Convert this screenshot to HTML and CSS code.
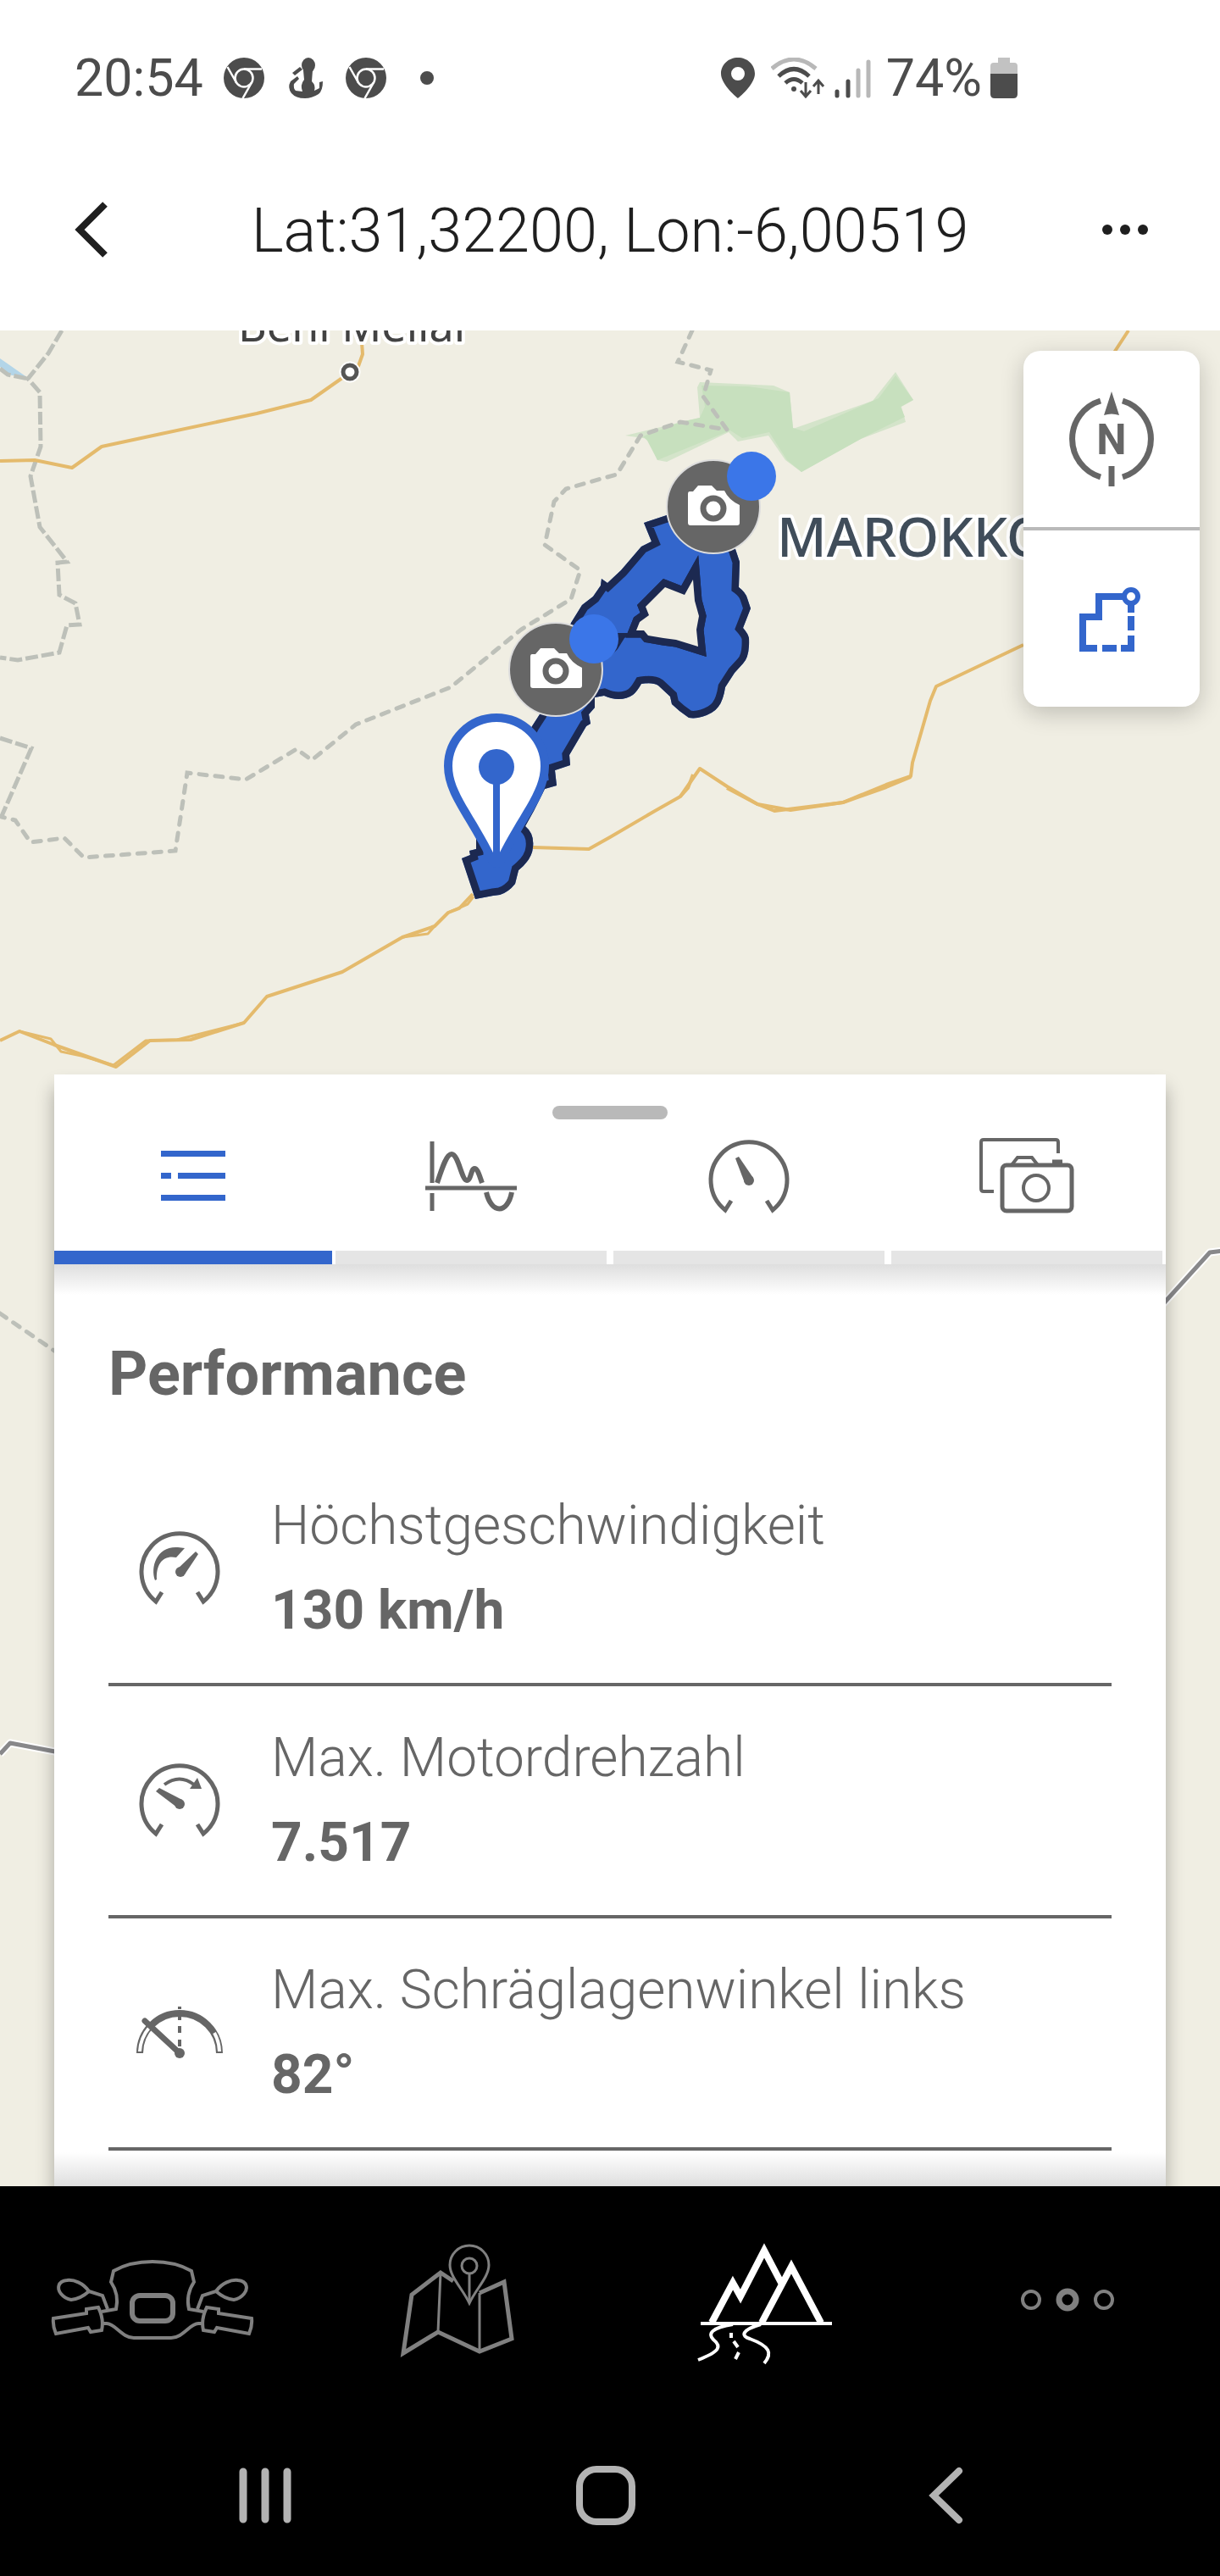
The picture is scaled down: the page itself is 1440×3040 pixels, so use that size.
FILE: index.html
```html
<!DOCTYPE html>
<html lang="de">
<head>
    <meta charset="UTF-8">
    <meta name="viewport" content="width=device-width, initial-scale=1.0">
    <title>Tour - Performance</title>
    <link rel="stylesheet" href="styles.css">
</head>
<body>
    <!-- Shared icon shapes -->
    <svg class="defs" width="0" height="0" aria-hidden="true">
        <symbol id="chrome" viewBox="0 0 48 48">
            <circle cx="24" cy="24" r="24" fill="#4c4c4c"/>
            <g fill="none" stroke="#fff" stroke-width="2.5">
                <circle cx="24" cy="24" r="10.5"/>
                <path d="M24 13.5H45M15 29.5L4.5 11M33 29.5L22.5 48"/>
            </g>
        </symbol>
        <symbol id="gauge" viewBox="0 0 96 88" overflow="visible">
            <path d="M27 72L20 83A45 45 0 1 1 76 83L69 72" fill="none" stroke="#666" stroke-width="5"/>
        </symbol>
        <symbol id="photo-pin" viewBox="-56 -56 112 112" overflow="visible">
            <circle r="55" fill="#666" stroke="#ddd" stroke-width="2"/>
            <path d="M-28-18h4l6-7h16l6 6h9q5 11 18 17V19q0 3-3 3H-27q-3 0-3-3V-15q0-3 2-3z" fill="#fff"/>
            <circle cy="2" r="12" fill="#fff" stroke="#666" stroke-width="7"/>
            <circle cx="45" cy="-36" r="29" fill="#3b76e8"/>
        </symbol>
    </svg>

    <div class="app">
        <div class="status-bar">
            <div class="status-left">
                <span>20:54</span>
                <svg width="48" height="48"><use href="#chrome"/></svg>
                <svg width="48" height="48" viewBox="0 0 48 48" fill="#4c4c4c">
                    <ellipse cx="28" cy="9" rx="8" ry="9"/>
                    <path d="M22 15h11l-1 13q5 5 3 11l6-3V29l4-1q0 11-5 15-8 5-16 5-11 0-16-6-5-7-1-14l8-6 2 3-6 6q-1 5 2 8l8 1q-3-8 2-14z"/>
                    <path d="M9 18l9-7 3 3-9 7z"/>
                </svg>
                <svg width="48" height="48"><use href="#chrome"/></svg>
                <svg width="48" height="48" viewBox="0 0 48 48"><circle cx="24" cy="24" r="8" fill="#4c4c4c"/></svg>
            </div>
            <div class="status-right">
                <svg width="52" height="48" viewBox="0 0 52 48">
                    <path d="M23 0C12 0 3 8 3 19c0 13 20 29 20 29s20-16 20-29C43 8 34 0 23 0zm0 27a8 8 0 1 1 0-16 8 8 0 0 1 0 16z" fill="#4c4c4c"/>
                </svg>
                <svg width="64" height="48" viewBox="0 0 64 48" fill="none" stroke="#4c4c4c" stroke-width="5">
                    <path d="M1 13Q27-9 53 13" stroke="#b8b8b8"/>
                    <path d="M9 22Q27 5 45 22M17 30Q27 21 37 30"/>
                    <circle cx="27" cy="37" r="3" fill="#4c4c4c" stroke="none"/>
                    <path d="M41 29V45M35 39l6 7 6-7M56 43V28M50 34l6-7 6 7" stroke-width="3"/>
                </svg>
                <svg width="52" height="48" viewBox="0 0 52 48" stroke-width="5" stroke-linecap="round">
                    <path d="M4 40v5M17 28v17" stroke="#4c4c4c"/>
                    <path d="M29 15v30M41 5v40" stroke="#b8b8b8"/>
                </svg>
                <span>74%</span>
                <svg width="32" height="48" viewBox="0 0 32 48">
                    <path d="M9 0h14v6h5q4 0 4 4v10H0V10q0-4 4-4h5z" fill="#c2c2c2"/>
                    <path d="M0 19h32v24q0 5-5 5H5q-5 0-5-5z" fill="#4c4c4c"/>
                </svg>
            </div>
        </div>

        <header class="header">
            <button class="header-button" aria-label="Zurück">
                <svg width="64" height="72" viewBox="0 0 64 72" fill="none" stroke="#1f1f1f" stroke-width="8"><path d="M44 5L14 35L44 65"/></svg>
            </button>
            <h1>Lat:31,32200, Lon:-6,00519</h1>
            <button class="header-button" aria-label="Mehr">
                <svg width="64" height="72" viewBox="0 0 64 72" fill="#1f1f1f"><circle cx="11" cy="35" r="6"/><circle cx="32" cy="35" r="6"/><circle cx="53" cy="35" r="6"/></svg>
            </button>
        </header>

        <main class="map">
            <svg class="map-canvas" viewBox="0 390 1440 2190" preserveAspectRatio="xMidYMin slice">
                <defs>
                    <path id="track" clip-rule="evenodd" d="M760 617L787 608L842 598L868 648L873 663L872 693Q880 699 882 706L886 718L877 741Q883 748 884 753Q885 775 877 783L867 794L856 811Q855 818 853 824Q849 836 840 841Q826 849 813 847L802 839L793 831L791 822L777 809Q771 805 757 807Q752 816 747 820Q740 825 730 825Q722 825 713 821L702 823L702 835L695 843L697 854L692 857L672 891L673 903L655 909L657 927L643 931L630 957L620 975Q631 984 629 1000Q628 1014 612 1027L608 1043Q600 1053 590 1056L582 1057L561 1061L545 1013L555 1009L554 1004L562 1002V980L628 857L637 843L656 790L674 735L687 714L700 704L709 691L710 683L717 688L733 673L757 645L769 639ZM785 693L808 702L818 684L820 709L825 727L822 743L824 763L798 755L783 753L765 750L760 744L751 744L755 734L766 726L762 716Z"/>
                    <clipPath id="track-clip"><use href="#track"/></clipPath>
                </defs>

                <!-- Land and water -->
                <path d="M0 423L33 446L9 442L0 433z" fill="#b3d5e8"/>
                <path d="M738 514L826 493L823 457L826 451L913 455L932 463L936 506L1030 473L1057 439L1078 472L1064 480L1069 498L1016 518L946 557L927 543L907 514L871 521L860 510L787 545L776 543L765 518z" fill="#d4e4ca"/>
                <path d="M759 515L803 498L826 493L832 480L828 455L883 456L932 463L936 505L949 509L1037 470L1057 443L1078 472L1063 480L1068 492L1016 518L946 557L929 543L908 510L876 517L862 508L776 543L764 520z" fill="#c7e0be"/>

                <!-- Borders -->
                <g fill="none" stroke="#bdc0b9" stroke-width="5">
                    <g stroke-dasharray="15 4">
                        <path d="M73 390L57 417L33 447L47 463L48 527L36 562L47 622L77 660L79 663L68 664L70 702L89 712L94 737L79 738L70 770L21 779L0 776"/>
                        <path d="M0 435L9 442L33 447M0 871L37 883L2 963"/>
                    </g>
                    <g stroke-dasharray="9 10" stroke-linecap="round">
                        <path d="M817 390L800 427L839 437L830 468L858 507L803 498L756 514L728 560L713 564L668 577L654 592L643 643L685 673L674 707L615 743L532 811L420 855L368 897L350 884L290 920L221 912L207 1004L99 1012L76 989L36 994L18 968L2 964"/>
                        <path d="M0 1550L64 1594"/>
                    </g>
                </g>

                <!-- Roads -->
                <g fill="none" stroke="#e4ba6c" stroke-width="4" stroke-linejoin="round">
                    <path d="M0 544L41 543L85 552L120 527L190 512L303 488L367 472L404 446L413 439L423 432L428 418L426 390"/>
                    <path d="M1332 390L1315 416M1208 761L1105 810L1098 827L1077 900L1075 916L1046 926L995 947L933 956L894 949L858 928L826 907L803 940L773 957L720 988L695 1002L629 1000"/>
                    <path d="M1075 917L1046 929L995 947L914 957L894 949L858 930M803 940L812 930L818 914"/>
                    <path d="M558 1055L542 1072L529 1077L513 1093L475 1106L404 1147L315 1176L288 1207L225 1227L177 1228L137 1259L64 1233L23 1217L0 1228"/>
                    <path d="M559 1058L552 1067L529 1077M513 1093L505 1102L475 1106M288 1207L209 1227L172 1228L134 1257L96 1246L72 1241L60 1226L23 1217" stroke-width="3"/>
                </g>
                <g fill="none" stroke-linejoin="round">
                    <path d="M0 2070L12 2057L70 2068M1370 1542L1428 1478L1445 1476" stroke="#fff" stroke-width="9"/>
                    <path d="M0 2070L12 2057L70 2068M1370 1542L1428 1478L1445 1476" stroke="#88888a" stroke-width="5"/>
                </g>

                <!-- Place names -->
                <circle cx="413" cy="439" r="8" fill="#fff" stroke="#fff" stroke-width="9"/>
                <circle cx="413" cy="439" r="8" fill="#fff" stroke="#555" stroke-width="5"/>
                <text class="map-town" x="281" y="403">Beni Mellal</text>
                <text class="map-country" x="917" y="657">MAROKKO</text>

                <!-- Recorded track -->
                <use href="#track" fill="#3366cc" fill-rule="evenodd"/>
                <use href="#track" fill="none" stroke="#1c2951" stroke-width="17" clip-path="url(#track-clip)"/>
                <path d="M785 693L808 702L818 684L820 709L825 727L822 743L824 763L798 755L783 753L765 750L760 744L751 744L755 734L766 726L762 716Z" fill="#f0eee3" stroke="#1c2951" stroke-width="17" paint-order="stroke"/>
                <path d="M726 747H746L737 753L729 766L719 776z" fill="#1c2951"/>

                <!-- Start marker -->
                <path d="M586 1014C560 960 534 935 534 904A52 52 0 0 1 638 904C638 935 612 960 586 1014z" fill="#fff" stroke="#3366cc" stroke-width="20" stroke-linejoin="round" paint-order="stroke"/>
                <circle cx="586" cy="905" r="21" fill="#3366cc"/>
                <path d="M586 905V1014" stroke="#3366cc" stroke-width="8"/>

                <use href="#photo-pin" x="786" y="542" width="112" height="112"/>
                <use href="#photo-pin" x="600" y="734" width="112" height="112"/>
            </svg>

            <div class="map-controls">
                <button aria-label="Nach Norden ausrichten">
                    <svg width="112" height="120" viewBox="0 0 112 120">
                        <path d="M43 15A47 47 0 0 0 43 105M69 15A47 47 0 0 1 69 105" fill="none" stroke="#666" stroke-width="7"/>
                        <path d="M56 4L65 32Q56 29 47 32z" fill="#666"/>
                        <path d="M56 92V116" stroke="#666" stroke-width="7"/>
                        <text class="compass-letter" x="56" y="78" text-anchor="middle">N</text>
                    </svg>
                </button>
                <button aria-label="Route anzeigen">
                    <svg width="96" height="96" viewBox="0 0 96 96" fill="none" stroke="#3366cc" stroke-width="8">
                        <path d="M62 22H33V46H14V83H31M37 83H54M59 83H71V68M71 62V45M71 41V31"/>
                        <circle cx="71" cy="22" r="8" stroke-width="6" fill="#fff"/>
                    </svg>
                </button>
            </div>

            <section class="sheet">
                <div class="sheet-handle"></div>
                <nav class="tabs">
                    <button class="tab active" aria-label="Übersicht">
                        <svg width="120" height="96" viewBox="0 0 120 96" fill="#3366cc">
                            <path d="M22 18H98V25H22zM22 44H34V51H22zM42 44H98V51H42zM22 70H98V77H22z"/>
                        </svg>
                    </button>
                    <button class="tab" aria-label="Diagramm">
                        <svg width="120" height="96" viewBox="0 0 120 96" fill="none" stroke="#666" stroke-width="5">
                            <path d="M14 7V56M14 68V89M6 62H114"/>
                            <path d="M20 56C26 38 31 22 37 22C45 22 49 53 55 53C60 53 60 39 64 39C68 39 70 48 73 56M78 67C84 93 103 93 108 67" stroke-width="6"/>
                        </svg>
                    </button>
                    <button class="tab" aria-label="Messwerte">
                        <svg width="120" height="96" viewBox="0 0 120 96">
                            <use href="#gauge" x="12" y="5" width="96" height="88"/>
                            <path d="M44 27L48 25L65 50L55 56z" fill="#666"/>
                            <circle cx="60" cy="53" r="6" fill="#666"/>
                        </svg>
                    </button>
                    <button class="tab" aria-label="Fotos">
                        <svg width="120" height="96" viewBox="0 0 120 96" fill="none" stroke="#666" stroke-width="5">
                            <path d="M21 66H9Q6 66 6 63V8Q6 5 9 5H94Q97 5 97 8V21" stroke-width="4"/>
                            <rect x="31" y="35" width="82" height="54" rx="5"/>
                            <path d="M42 35L49 26H66L73 35" stroke-width="4"/>
                            <path d="M90 31H102"/>
                            <circle cx="71" cy="62" r="15" stroke-width="4"/>
                        </svg>
                    </button>
                </nav>

                <div class="sheet-content">
                    <h2>Performance</h2>
                    <ul class="stats">
                        <li>
                            <svg width="96" height="88" viewBox="0 0 96 88" fill="#666">
                                <use href="#gauge" width="96" height="88"/>
                                <path d="M19 58C13 41 22 17 46 19L54 20L44 31C29 28 20 38 21 57zM45 45L67 24L70 27L54 51z"/>
                                <circle cx="49" cy="48" r="6"/>
                            </svg>
                            <div>
                                <p class="label">Höchstgeschwindigkeit</p>
                                <p class="value">130 km/h</p>
                            </div>
                        </li>
                        <li>
                            <svg width="96" height="88" viewBox="0 0 96 88" fill="#666">
                                <use href="#gauge" width="96" height="88"/>
                                <path d="M20 33L24 29L51 43L45 52z"/>
                                <circle cx="48" cy="48" r="6"/>
                                <path d="M30 25Q48 12 65 25" fill="none" stroke="#666" stroke-width="4"/>
                                <path d="M69 17L74 30H60z"/>
                            </svg>
                            <div>
                                <p class="label">Max. Motordrehzahl</p>
                                <p class="value">7.517</p>
                            </div>
                        </li>
                        <li>
                            <svg width="96" height="88" viewBox="0 0 96 88" fill="none" stroke="#666">
                                <path d="M1 68A47 47 0 0 1 95 68" stroke-width="8"/>
                                <path d="M1 66A47 47 0 0 1 12 38M89 44A47 47 0 0 1 95 66" stroke="#fff" stroke-width="4"/>
                                <path d="M48 13V16M48 24V29M48 36V44M48 52V60" stroke-width="4"/>
                                <path d="M7 30L48 68" stroke-width="7" stroke-linecap="round"/>
                                <circle cx="48" cy="68" r="6" fill="#666" stroke="none"/>
                            </svg>
                            <div>
                                <p class="label">Max. Schräglagenwinkel links</p>
                                <p class="value">82°</p>
                            </div>
                        </li>
                    </ul>
                </div>
            </section>
        </main>

        <nav class="app-nav">
            <a href="#fahrzeug" aria-label="Fahrzeug">
                <svg width="240" height="160" viewBox="0 0 240 160" fill="none" stroke="#808080" stroke-width="4">
                    <g id="moto-half">
                        <path d="M120 34Q93 34 74 45L71 58Q81 73 77 90L60 93"/>
                        <path d="M3 101L42 95V90L56 88Q63 102 60 115L47 117L44 112L6 119Q2 110 3 101z"/>
                        <path d="M60 107H66C76 107 84 124 98 124H120"/>
                        <path d="M67 90L61 74L45 69C38 59 27 55 19 56C8 57 7 66 12 72Q17 78 24 79Q35 78 45 69"/>
                    </g>
                    <use href="#moto-half" transform="translate(240 0) scale(-1 1)"/>
                    <rect x="96" y="74" width="48" height="30" rx="9" stroke-width="6"/>
                </svg>
            </a>
            <a href="#karte" aria-label="Karte">
                <svg width="240" height="160" viewBox="0 0 240 160" fill="none" stroke="#808080" stroke-width="5">
                    <path d="M115 57L100 47L66 73L56 142L97 117L146 140L184 125L175 58L146 71"/>
                    <path d="M100 47L97 117M146 71V140" stroke-width="3"/>
                    <path d="M134 83C126 66 111 52 111 38A23 23 0 0 1 157 38C157 52 142 66 134 83z" stroke-width="3"/>
                    <circle cx="134" cy="39" r="9" stroke-width="3"/>
                    <path d="M134 48V80" stroke-width="3"/>
                </svg>
            </a>
            <a href="#touren" aria-label="Touren">
                <svg width="240" height="160" viewBox="0 0 240 160" fill="none" stroke="#fff" stroke-width="8">
                    <path d="M60 106L85 59L94 75L122 21L142 59M119 106L154 40L189 106"/>
                    <path d="M47 107H202" stroke-width="4"/>
                    <path d="M85 108C60 112 55 119 62 126C72 134 70 140 44 150M118 108C94 115 95 122 105 125C129 134 132 142 122 154M83 118V124M86 128L91 135M92 141L88 149" stroke-width="4"/>
                </svg>
            </a>
            <a href="#mehr" aria-label="Mehr">
                <svg width="240" height="160" viewBox="0 0 240 160" fill="none" stroke="#808080" stroke-width="4">
                    <circle cx="77" cy="79" r="10"/>
                    <circle cx="120" cy="79" r="10" stroke-width="7"/>
                    <circle cx="163" cy="79" r="10"/>
                </svg>
            </a>
        </nav>

        <div class="system-nav">
            <button aria-label="Letzte Apps">
                <svg width="72" height="72" viewBox="0 0 72 72" stroke="#b3b3b3" stroke-width="9" stroke-linecap="round"><path d="M10 8V64M36 8V64M62 8V64"/></svg>
            </button>
            <button aria-label="Startbildschirm">
                <svg width="72" height="72" viewBox="0 0 72 72" fill="none" stroke="#b3b3b3" stroke-width="8"><rect x="5" y="5" width="62" height="62" rx="20"/></svg>
            </button>
            <button aria-label="Zurück">
                <svg width="72" height="72" viewBox="0 0 72 72" fill="none" stroke="#b3b3b3" stroke-width="8" stroke-linecap="round"><path d="M51 7L21 36L51 65"/></svg>
            </button>
        </div>
    </div>
</body>
</html>
```
FILE: styles.css
```css
* {
    box-sizing: border-box;
}
body {
    margin: 0;
    font-family: Roboto, sans-serif;
    background: #000;
    color: #666;
}
h1, h2, p, ul {
    margin: 0;
    padding: 0;
}
button {
    padding: 0;
    border: none;
    background: none;
    font: inherit;
    cursor: pointer;
}
svg {
    display: block;
    flex-shrink: 0;
}
.defs {
    position: absolute;
}
.app {
    display: flex;
    flex-direction: column;
    min-height: 100vh;
}

/* Status bar */
.status-bar {
    display: flex;
    justify-content: space-between;
    align-items: center;
    height: 184px;
    padding: 0 239px 0 88px;
    background: #fff;
    color: #4c4c4c;
    font-size: 61px;
    line-height: 72px;
}
.status-left,
.status-right {
    display: flex;
    align-items: center;
    gap: 24px;
}
.status-right {
    gap: 10px;
}

/* Header */
.header {
    display: flex;
    justify-content: space-between;
    align-items: center;
    height: 206px;
    padding: 0 80px 30px;
    background: #fff;
    color: #1f1f1f;
}
.header h1 {
    font-size: 72px;
    font-weight: 300;
}

/* Map */
.map {
    position: relative;
    flex: 1;
    padding: 878px 64px 0;
    overflow: hidden;
    background: #f0eee3;
}
.map-canvas {
    position: absolute;
    top: 0;
    left: 0;
    width: 100%;
    height: 100%;
}
.map-town,
.map-country {
    font-family: "Noto Sans", sans-serif;
    font-size: 52px;
    fill: #424242;
    stroke: #fff;
    stroke-width: 8px;
    stroke-linejoin: round;
    paint-order: stroke;
}
.map-country {
    font-size: 64px;
    font-weight: 500;
    fill: #404d5a;
}
.map-controls {
    position: absolute;
    top: 24px;
    right: 24px;
    width: 208px;
    border-radius: 20px;
    background: #fff;
    box-shadow: 0 8px 28px rgba(0, 0, 0, 0.2);
}
.map-controls button {
    display: flex;
    justify-content: center;
    align-items: center;
    width: 100%;
    height: 208px;
}
.map-controls button + button {
    height: 212px;
    border-top: 4px solid #b9b9b9;
}
.compass-letter {
    font-size: 50px;
    font-weight: 700;
    fill: #666;
}

/* Bottom sheet */
.sheet {
    position: relative;
    padding-top: 37px;
    background: #fff;
    box-shadow: 0 16px 20px rgba(0, 0, 0, 0.3);
}
.sheet-handle {
    width: 136px;
    height: 16px;
    margin: 0 auto;
    border-radius: 8px;
    background: #b9b9b9;
}
.tabs {
    display: grid;
    grid-template-columns: repeat(4, 1fr);
}
.tab {
    display: flex;
    justify-content: center;
    margin: 0 4px;
    padding: 19px 0 40px;
    border-bottom: 16px solid #e5e5e5;
}
.tab.active {
    margin: 0;
    border-color: #3366cc;
}
.sheet-content {
    padding: 88px 64px 42px;
    background:
        linear-gradient(#dedede, #fff) top / 100% 36px no-repeat,
        linear-gradient(#fff, #dedede) bottom / 100% 40px no-repeat;
}
.sheet-content h2 {
    margin-bottom: 52px;
    font-size: 72px;
    font-weight: 700;
    line-height: 84px;
}
.stats {
    list-style: none;
}
.stats li {
    display: flex;
    align-items: center;
    gap: 60px;
    padding: 35px 36px;
    border-bottom: 4px solid #666;
}
.stats svg {
    overflow: visible;
}
.label,
.value {
    font-size: 64px;
    font-weight: 300;
    line-height: 100px;
}
.value {
    font-weight: 700;
}

/* Bottom navigation */
.app-nav {
    display: grid;
    grid-template-columns: repeat(4, 1fr);
    height: 270px;
    background: #000;
}
.app-nav a {
    display: flex;
    justify-content: center;
    align-items: center;
}
.system-nav {
    display: grid;
    grid-template-columns: repeat(3, 1fr);
    height: 190px;
    padding: 0 122px 0 112px;
    background: #000;
}
.system-nav button {
    display: flex;
    justify-content: center;
    align-items: center;
}
```
